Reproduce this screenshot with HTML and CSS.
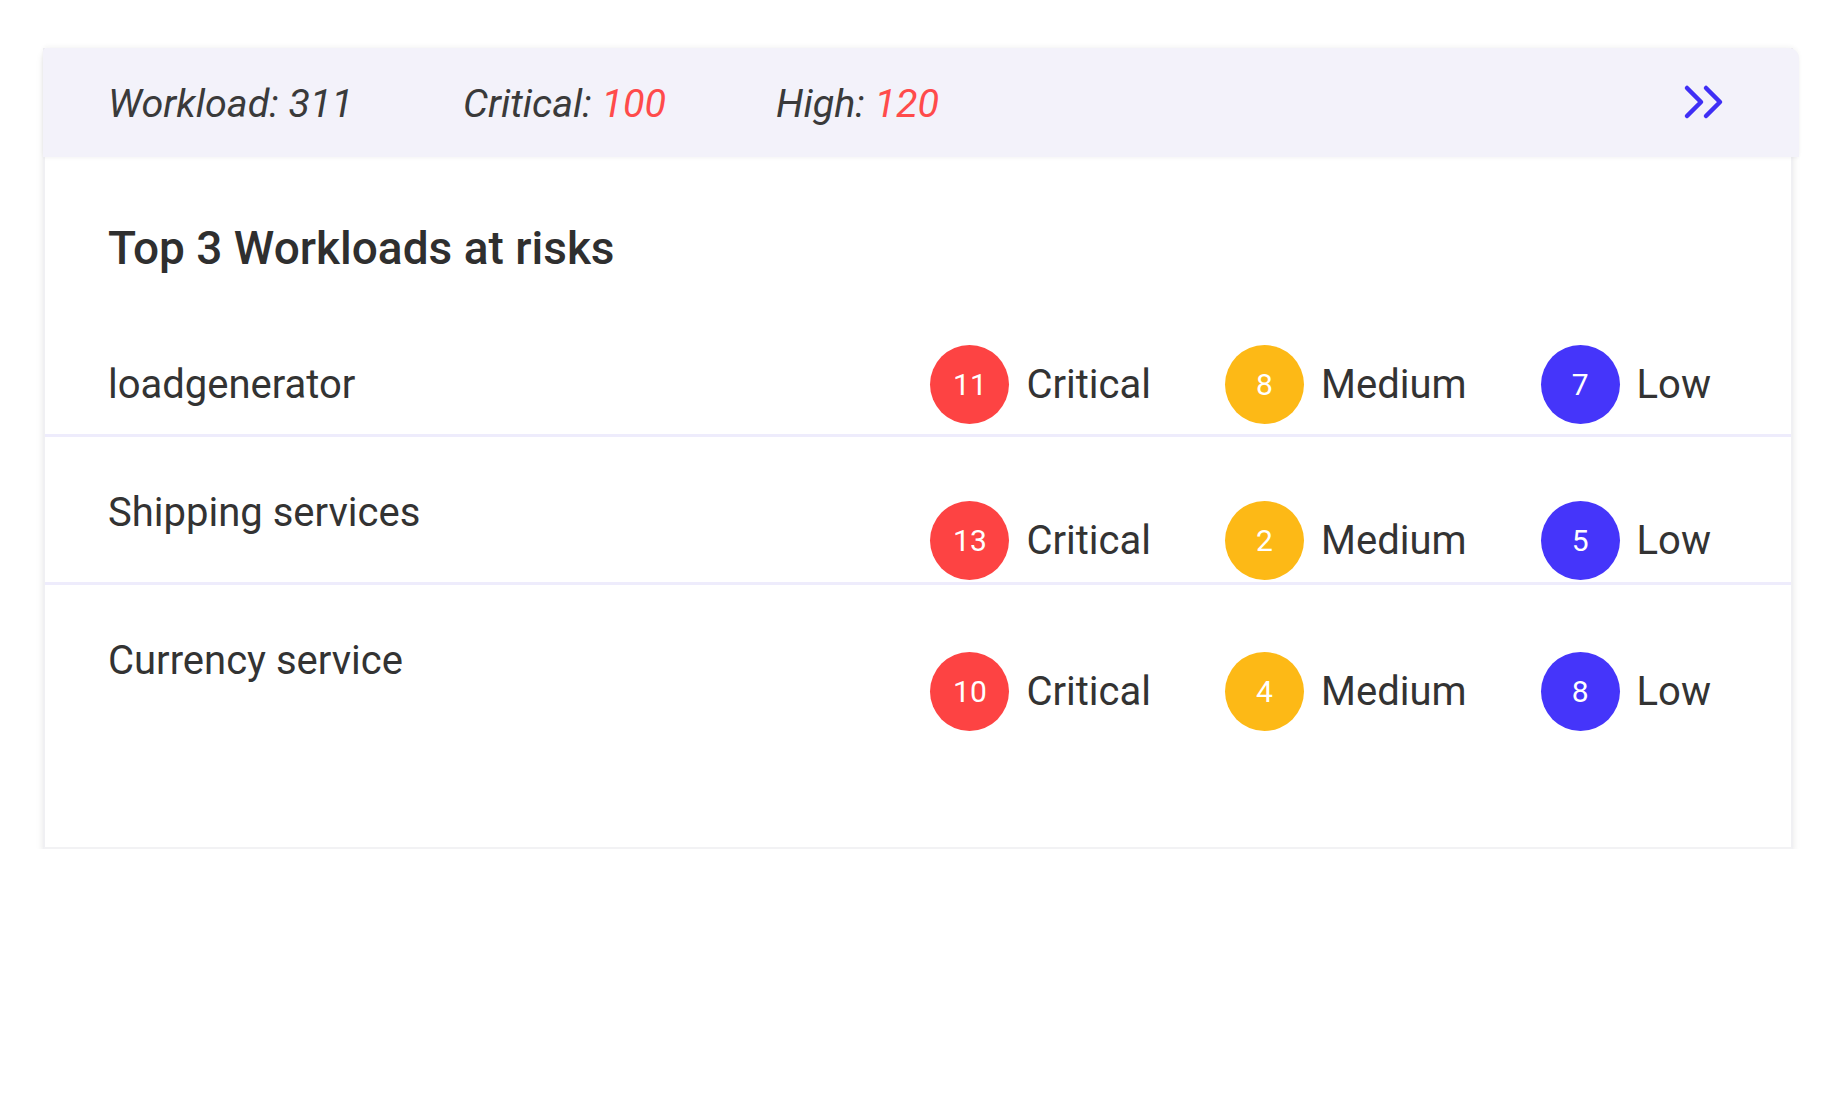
FILE: index.html
```html
<!DOCTYPE html>
<html lang="en">
<head>
<meta charset="utf-8">
<title>Top 3 Workloads at risks</title>
<link rel="stylesheet" href="styles.css">
</head>
<body>
<div class="page">
  <section class="card">
    <header class="card-header">
      <div class="stats">
        <span class="stat">Workload: 311</span>
        <span class="stat">Critical: <em class="num">100</em></span>
        <span class="stat">High: <em class="num">120</em></span>
      </div>
      <svg class="chevrons" width="44" height="36" viewBox="0 0 44 36" aria-hidden="true">
        <path d="M5 4 L19 18 L5 32 M24 4 L38 18 L24 32" fill="none" stroke="#3f2ff5" stroke-width="4.5" stroke-linecap="round" stroke-linejoin="round"/>
      </svg>
    </header>
    <div class="card-body">
      <h2 class="title">Top 3 Workloads at risks</h2>
      <div class="row row-first">
        <div class="name">loadgenerator</div>
        <div class="badges">
          <div class="badge"><span class="dot dot-critical">11</span><span class="label">Critical</span></div>
          <div class="badge"><span class="dot dot-medium">8</span><span class="label">Medium</span></div>
          <div class="badge"><span class="dot dot-low">7</span><span class="label">Low</span></div>
        </div>
      </div>
      <div class="row">
        <div class="name">Shipping services</div>
        <div class="badges">
          <div class="badge"><span class="dot dot-critical">13</span><span class="label">Critical</span></div>
          <div class="badge"><span class="dot dot-medium">2</span><span class="label">Medium</span></div>
          <div class="badge"><span class="dot dot-low">5</span><span class="label">Low</span></div>
        </div>
      </div>
      <div class="row row-last">
        <div class="name">Currency service</div>
        <div class="badges">
          <div class="badge"><span class="dot dot-critical">10</span><span class="label">Critical</span></div>
          <div class="badge"><span class="dot dot-medium">4</span><span class="label">Medium</span></div>
          <div class="badge"><span class="dot dot-low">8</span><span class="label">Low</span></div>
        </div>
      </div>
    </div>
  </section>
</div>
</body>
</html>
```

FILE: styles.css
```css
* { box-sizing: border-box; }

html, body {
  margin: 0;
  padding: 0;
  background: #ffffff;
}

body {
  font-family: Roboto, "Liberation Sans", Arial, sans-serif;
  color: #333333;
}

.page {
  padding: 48px 40px 0 43px;
}

.card {
  width: 1750px;
  background: #ffffff;
  border-left: 2px solid #f0f0f3;
  border-right: 2px solid #f0f0f3;
  border-bottom: 2px solid #f2f2f4;
  box-shadow: 0 6px 8px -1px rgba(0, 0, 0, 0.12);
}

.card-header {
  display: flex;
  align-items: center;
  justify-content: space-between;
  height: 109px;
  width: calc(100% + 10px);
  margin-left: -2px;
  padding: 0 73px 0 65px;
  background: #f3f2fa;
  border-radius: 4px 10px 0 0;
  box-shadow: 0 -2px 4px rgba(0, 0, 0, 0.04), 0 2px 3px rgba(0, 0, 0, 0.03);
}

.stats {
  display: flex;
  gap: 110px;
  padding-top: 2px;
}

.stat {
  font-size: 39.5px;
  font-style: italic;
  color: #3a3a3a;
  line-height: 1;
}

.num {
  font-style: italic;
  color: #ff4b4b;
}

.chevrons {
  display: block;
  margin-top: -2px;
}

.card-body {
  padding: 0 80px 114px 63px;
}

.title {
  margin: 0;
  padding-top: 64px;
  font-size: 46px;
  font-weight: 500;
  line-height: 54px;
  color: #2f2f2f;
}

.row {
  display: flex;
  justify-content: space-between;
  align-items: flex-start;
  border-bottom: 3px solid #eeecfc;
  margin-left: -63px;
  margin-right: -80px;
  padding-left: 63px;
  padding-right: 80px;
}

.row-first {
  align-items: center;
  margin-top: 70px;
}

.row-last {
  border-bottom: none;
}

.name {
  font-size: 40px;
  line-height: 48px;
  color: #333333;
  padding-top: 52px;
}

.row-first .name {
  padding-top: 0;
  padding-bottom: 9px;
}

.badges {
  display: flex;
  gap: 74px;
  padding: 64px 0 2px;
}

.row-first .badges {
  padding: 0 0 10px;
}

.row-last .badges {
  padding-top: 67px;
}

.badge {
  display: flex;
  align-items: center;
  gap: 17px;
}

.dot {
  display: flex;
  align-items: center;
  justify-content: center;
  width: 79px;
  height: 79px;
  border-radius: 50%;
  font-size: 30px;
  color: #ffffff;
  line-height: 1;
}

.dot-critical { background: #fd4343; }
.dot-medium { background: #fdb916; }
.dot-low { background: #4535fa; }

.label {
  font-size: 40px;
  line-height: 48px;
  color: #333333;
}
```
